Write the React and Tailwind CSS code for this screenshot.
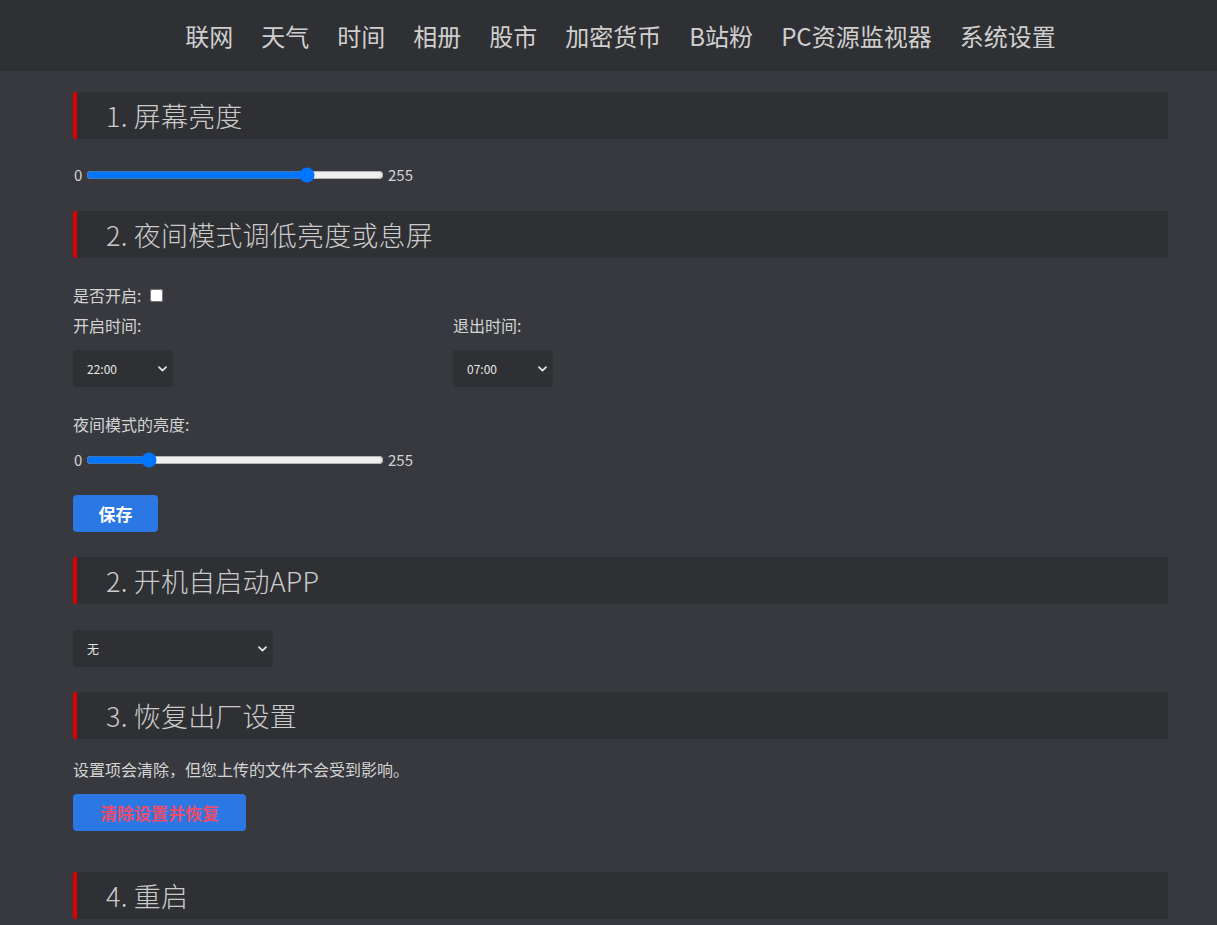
import React from "react";

const font = { fontFamily: '"Noto Sans CJK SC", "Noto Sans", sans-serif' };

function SectionBar({ children }) {
  return (
    <div className="h-[47px] bg-[#2f3034] border-l-4 border-[#e00000] rounded-l-[3px] flex items-center pl-[29px]">
      <span className="text-[27px] font-light text-[#cbcbcb] leading-none tracking-[0.2px]">{children}</span>
    </div>
  );
}

function Chevron() {
  return (
    <svg width="9" height="6" viewBox="0 0 9 6" className="pointer-events-none">
      <path d="M1 1.2 L4.5 4.6 L8 1.2" stroke="#e6e6e6" strokeWidth="1.7" fill="none" strokeLinecap="round" strokeLinejoin="round" />
    </svg>
  );
}

function Select({ value, width, options }) {
  return (
    <div className={`relative h-[37px] ${width}`}>
      <select
        defaultValue={value}
        className="appearance-none w-full h-full bg-[#2f3034] text-[#e6e6e6] text-[12px] pl-[14px] rounded-[3px] outline-none"
        style={font}
      >
        {options.map((o) => (
          <option key={o} value={o}>{o}</option>
        ))}
      </select>
      <div className="absolute right-[6px] top-0 h-full flex items-center pointer-events-none">
        <Chevron />
      </div>
    </div>
  );
}

function Slider({ value }) {
  return (
    <div className="h-[20px] flex items-center text-[15px] text-[#d4d4d4]">
      <span className="w-[13px] pl-[1px]">0</span>
      <input
        type="range"
        min="0"
        max="255"
        defaultValue={value}
        className="m-0 w-[298px] h-[16px] accent-[#0075ff]"
      />
      <span className="ml-[4px]">255</span>
    </div>
  );
}

export default function App() {
  const nav = ["联网", "天气", "时间", "相册", "股市", "加密货币", "B站粉", "PC资源监视器", "系统设置"];
  return (
    <div className="min-h-screen bg-[#37393e]" style={font}>
      <header className="h-[71px] bg-[#2f3034] flex items-center justify-center pl-[24px] gap-[28px]">
        {nav.map((n) => (
          <span key={n} className="text-[24px] text-[#cfcfcf] leading-none">{n}</span>
        ))}
      </header>
      <main className="ml-[73px] w-[1095px] pt-[21px] pb-[20px] flex flex-col">
        <SectionBar>1. 屏幕亮度</SectionBar>
        <div className="mt-[26px]">
          <Slider value={193} />
        </div>

        <div className="mt-[26px]">
          <SectionBar>2. 夜间模式调低亮度或息屏</SectionBar>
        </div>
        <div className="mt-[27px] h-[20px] flex items-center text-[16px] text-[#d4d4d4]">
          <span>是否开启:</span>
          <input type="checkbox" className="ml-[9px] w-[13px] h-[13px] m-0" />
        </div>
        <div className="mt-[10px] flex text-[16px] text-[#d4d4d4]">
          <div className="w-[380px] flex flex-col">
            <span className="h-[20px] leading-[20px]">开启时间:</span>
            <div className="mt-[15px]">
              <Select value="22:00" width="w-[100px]" options={["22:00", "23:00", "00:00"]} />
            </div>
          </div>
          <div className="flex flex-col">
            <span className="h-[20px] leading-[20px]">退出时间:</span>
            <div className="mt-[15px]">
              <Select value="07:00" width="w-[100px]" options={["06:00", "07:00", "08:00"]} />
            </div>
          </div>
        </div>
        <div className="mt-[27px] h-[20px] leading-[20px] text-[16px] text-[#d4d4d4]">夜间模式的亮度:</div>
        <div className="mt-[16px]">
          <Slider value={50} />
        </div>
        <div className="mt-[25px]">
          <button className="h-[37px] w-[85px] rounded-[4px] bg-[#2b78e4] text-white text-[17px] font-bold">保存</button>
        </div>

        <div className="mt-[25px]">
          <SectionBar>2. 开机自启动APP</SectionBar>
        </div>
        <div className="mt-[26px]">
          <Select value="无" width="w-[200px]" options={["无"]} />
        </div>

        <div className="mt-[25px]">
          <SectionBar>3. 恢复出厂设置</SectionBar>
        </div>
        <div className="mt-[20px] h-[20px] leading-[20px] text-[16px] text-[#d4d4d4]">
          设置项会清除，但您上传的文件不会受到影响。
        </div>
        <div className="mt-[15px]">
          <button className="h-[37px] w-[173px] rounded-[4px] bg-[#2b78e4] text-[#ec4d6c] text-[17px] font-bold">清除设置并恢复</button>
        </div>

        <div className="mt-[41px]">
          <SectionBar>4. 重启</SectionBar>
        </div>
      </main>
    </div>
  );
}
